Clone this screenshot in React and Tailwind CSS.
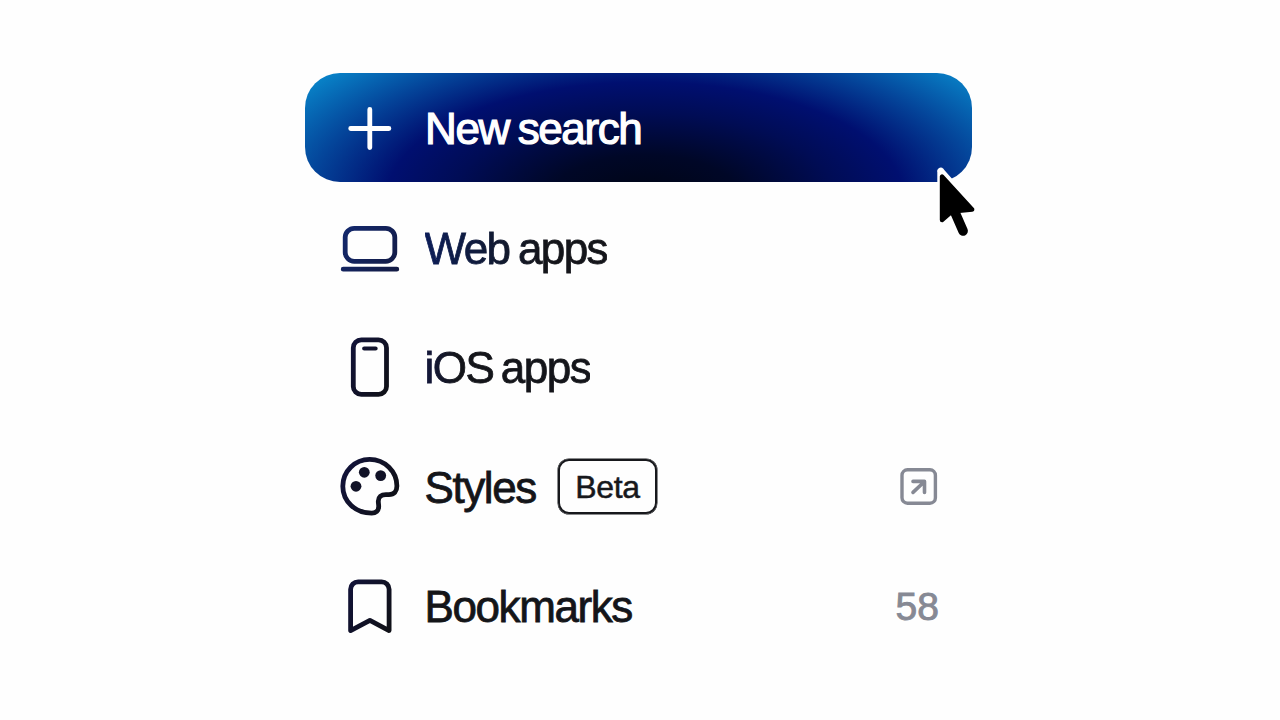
import clsx from "clsx";

/* ── Icons (all share a 60px box) ────────────────────────────── */
function Icon({ children }) {
  return (
    <svg
      viewBox="0 0 60 60"
      className="w-[60px] h-[60px] shrink-0"
      fill="none"
      strokeWidth="4.8"
      strokeLinecap="round"
      strokeLinejoin="round"
    >
      <defs>
        <linearGradient id="ink-laptop" gradientUnits="userSpaceOnUse" x1="0" y1="10" x2="60" y2="55">
          <stop offset="0" stopColor="#13296f" />
          <stop offset="1" stopColor="#131a42" />
        </linearGradient>
        <linearGradient id="ink-dark" gradientUnits="userSpaceOnUse" x1="0" y1="0" x2="60" y2="30">
          <stop offset="0" stopColor="#12133f" />
          <stop offset="1" stopColor="#101118" />
        </linearGradient>
      </defs>
      {children}
    </svg>
  );
}

const PlusIcon = () => (
  <Icon>
    <path d="M29.8 11.4v38.2M10.7 30.5h38.2" stroke="#fff" />
  </Icon>
);

const LaptopIcon = () => (
  <Icon>
    <rect x="5.2" y="11.3" width="49.6" height="33" rx="9" stroke="url(#ink-laptop)" />
    <path d="M3.2 52.2h53.6v.01" stroke="url(#ink-laptop)" />
  </Icon>
);

const PhoneIcon = () => (
  <Icon>
    <rect x="13.3" y="2.8" width="33.2" height="54.6" rx="8" stroke="url(#ink-dark)" />
    <path d="M24.2 11.5h11.4v.01" stroke="url(#ink-dark)" strokeWidth="4.2" />
  </Icon>
);

const PaletteIcon = () => (
  <Icon>
    <path
      d="M29.6 3.4C44.8 3.4 56.9 15.5 56.9 30c0 5.4-2.8 8.6-8 8.6h-3c-4.8 0-7.6 2.4-7.6 6.6 0 1.6.4 3.4.4 5.2 0 4.400-3 6.800-7 6.800C15.600 57.200 2.800 45.500 2.800 30.200 2.800 15.400 14.800 3.400 29.600 3.400Z"
      stroke="url(#ink-dark)"
    />
    <g fill="#111227">
      <circle cx="24.3" cy="16.3" r="5.4" />
      <circle cx="40.7" cy="19.6" r="5.4" />
      <circle cx="16" cy="30.3" r="5.4" />
    </g>
  </Icon>
);

const BookmarkIcon = () => (
  <Icon>
    <path
      d="M10.6 54.6V13.3a7.5 7.5 0 0 1 7.5-7.5h23.5a7.5 7.5 0 0 1 7.5 7.5V54.6L29.9 44.4Z"
      stroke="url(#ink-dark)"
    />
  </Icon>
);

const ExternalIcon = () => (
  <svg
    viewBox="0 0 38 38"
    className="w-[38px] h-[38px]"
    fill="none"
    stroke="#868994"
    strokeLinecap="round"
    strokeLinejoin="round"
  >
    <rect x="2" y="2.8" width="33.4" height="33.4" rx="5.5" strokeWidth="3.4" />
    <path d="M13 14.4h11.5v11M24 15 13 25.4" strokeWidth="3.6" />
  </svg>
);

function Cursor() {
  return (
    <svg
      viewBox="0 0 48 78"
      className="absolute left-[627px] top-[89px] w-[48px] h-[78px]"
      strokeLinejoin="round"
      strokeLinecap="round"
    >
      <path d="M8.8 9.2v46M8.8 9.2l30 34" stroke="#fff" strokeWidth="7" />
      <path d="M10 14.500v43.500l9.800-8.500 20.400-2Z" fill="#000" stroke="#000" strokeWidth="4.400" />
      <path d="M22.800 50l8.300 19" stroke="#000" strokeWidth="9.600" />
    </svg>
  );
}

/* ── Menu ────────────────────────────────────────────────────── */
const items = [
  {
    icon: LaptopIcon,
    label: "Web apps",
    text: "tracking-[-1.6px] [word-spacing:-2px] bg-linear-to-r from-[#0c1d58] to-[#14151a] to-65% bg-clip-text text-transparent",
  },
  {
    icon: PhoneIcon,
    label: "iOS apps",
    text: "tracking-[-1.5px] [word-spacing:-3.2px] bg-linear-to-r from-[#14173c] to-[#14151a] to-20% bg-clip-text text-transparent",
  },
  { icon: PaletteIcon, label: "Styles", text: "tracking-[-1.4px] text-[#141519]", badge: "Beta", external: true },
  { icon: BookmarkIcon, label: "Bookmarks", text: "tracking-[-1.4px] text-[#141519]", count: 58 },
];

function MenuItem({ icon: ItemIcon, label, text, badge, external, count }) {
  return (
    <li className="flex h-[109px] items-center pl-[35px] pr-[34px]">
      <ItemIcon />
      <span className={clsx("ml-[24.5px] pt-[3px] text-[44px] leading-[56px] [-webkit-text-stroke:0.8px]", text)}>
        {label}
      </span>
      {badge && (
        <span className="ml-[22px] flex h-[55px] w-[99px] items-center justify-center rounded-[11px] border-[2px] border-[#17181c] pt-[2px] text-[32px] tracking-[-0.4px] text-[#17181c] ring-[0.5px] ring-[#17181c] [-webkit-text-stroke:0.5px]">
          {badge}
        </span>
      )}
      {external && (
        <span className="ml-auto">
          <ExternalIcon />
        </span>
      )}
      {count && (
        <span className="-mr-px ml-auto pt-[4px] text-[39px] text-[#868994] [-webkit-text-stroke:0.9px]">{count}</span>
      )}
    </li>
  );
}

export default function App() {
  return (
    <main className="flex h-[720px] w-[1280px] justify-center overflow-hidden bg-[#fefefe] pt-[73px] pr-[3px] font-['Liberation_Sans',Arial,sans-serif]">
      <nav className="relative w-[667px]">
        <button className="flex h-[109px] w-full items-center rounded-[35px] pl-[35px] text-left bg-[radial-gradient(430px_192px_at_51%_114%,#000514_0%,#000727_22%,#000c55_44%,#000f70_60%,#04459a_78%,#0880c6_97%)]">
          <PlusIcon />
          <span className="ml-[25px] pt-[2px] text-[44px] leading-[56px] tracking-[-1.4px] [word-spacing:-2px] text-white [-webkit-text-stroke:1.2px]">
            New search
          </span>
        </button>
        <ul className="mt-[10.5px] flex flex-col gap-[10.5px]">
          {items.map((item) => (
            <MenuItem key={item.label} {...item} />
          ))}
        </ul>
        <Cursor />
      </nav>
    </main>
  );
}
